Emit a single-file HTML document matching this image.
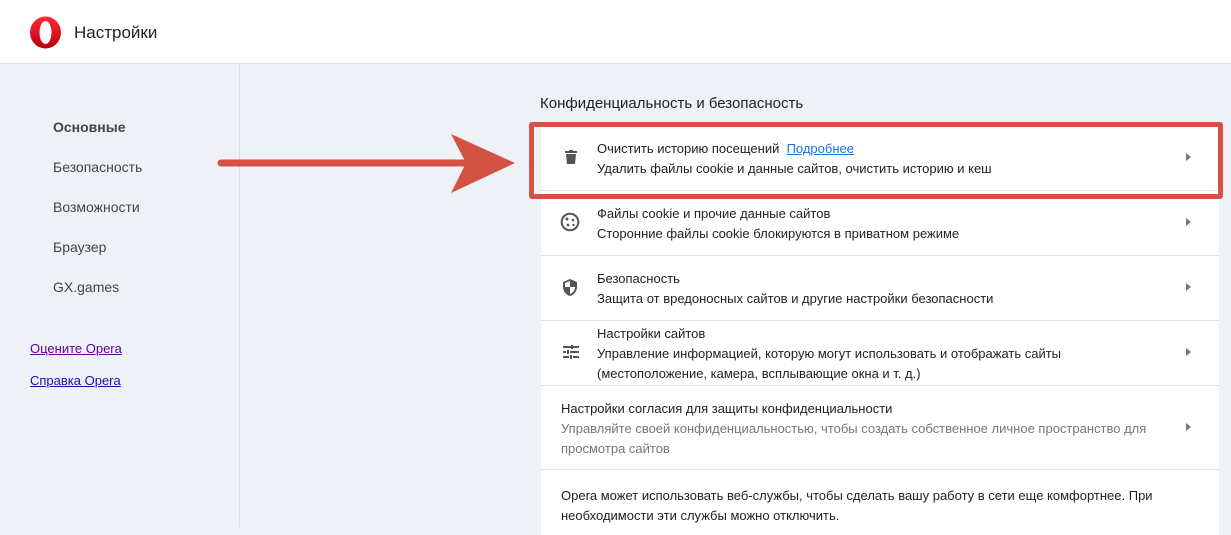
<!DOCTYPE html>
<html><head><meta charset="utf-8"><style>
body{margin:0;width:1231px;height:527px;overflow:hidden;background:#eef2f7;font-family:"Liberation Sans","DejaVu Sans",sans-serif;position:relative;color:#222}
.a{position:absolute;white-space:nowrap}
.hdr{position:absolute;left:0;top:0;width:1231px;height:63px;background:#fff;border-bottom:1px solid #d8dee6}
.vl{position:absolute;left:239px;top:64px;width:1px;height:463px;background:#d6dde6}
.side{font-size:14px;color:#444;left:53px}
.card{position:absolute;left:541px;top:125px;width:678px;height:410px;background:#fff}
.sep{position:absolute;left:541px;width:678px;height:1px;background:#dde3ea}
.t{font-size:13px;color:#222}
.chev{position:absolute;left:1186px;width:0;height:0;border-top:4px solid transparent;border-bottom:4px solid transparent;border-left:5px solid #777}
</style></head><body>
<div class="hdr"></div>
<svg class="a" style="left:29px;top:16px" width="33" height="33" viewBox="0 0 33 33"><defs><linearGradient id="g" x1="0" y1="0" x2="0" y2="1"><stop offset="0" stop-color="#ff2a37"/><stop offset="1" stop-color="#b8000f"/></linearGradient></defs><ellipse cx="16.5" cy="16.5" rx="15.5" ry="16" fill="url(#g)"/><ellipse cx="16.5" cy="16.5" rx="6" ry="11.5" fill="#fff"/></svg>
<div class="a" style="left:74px;top:23px;font-size:17px;color:#222">Настройки</div>
<div class="vl"></div>
<div class="a side" style="top:119px;font-weight:bold">Основные</div>
<div class="a side" style="top:159px">Безопасность</div>
<div class="a side" style="top:199px">Возможности</div>
<div class="a side" style="top:239px">Браузер</div>
<div class="a side" style="top:279px">GX.games</div>
<div class="a" style="left:30px;top:341px;font-size:13px;color:#660099;text-decoration:underline">Оцените Opera</div>
<div class="a" style="left:30px;top:373px;font-size:13px;color:#1a0dab;text-decoration:underline">Справка Opera</div>
<div class="a" style="left:540px;top:95px;font-size:15px;color:#222">Конфиденциальность и безопасность</div>
<div class="card"></div>
<div class="sep" style="top:190px"></div>
<div class="sep" style="top:255px"></div>
<div class="sep" style="top:320px"></div>
<div class="sep" style="top:385px"></div>
<div class="sep" style="top:469px"></div>
<!-- row1 -->
<svg class="a" style="left:565px;top:150px" width="12" height="14" viewBox="0 0 12 14"><rect x="0" y="1" width="12" height="2" fill="#555"/><rect x="4" y="0" width="4" height="2" fill="#555"/><path d="M1 4h10l-1 10H2z" fill="#555"/></svg>
<div class="a t" style="left:597px;top:141px">Очистить историю посещений&nbsp;&nbsp;<span style="color:#1a73e8;text-decoration:underline">Подробнее</span></div>
<div class="a t" style="left:597px;top:161px">Удалить файлы cookie и данные сайтов, очистить историю и кеш</div>
<div class="chev" style="top:153px"></div>
<!-- row2 -->
<svg class="a" style="left:560px;top:212px" width="20" height="20" viewBox="0 0 20 20"><circle cx="10" cy="10" r="8.3" fill="none" stroke="#555" stroke-width="2"/><circle cx="7" cy="7" r="1.5" fill="#555"/><circle cx="13" cy="8" r="1.3" fill="#555"/><circle cx="8" cy="13" r="1.4" fill="#555"/><circle cx="13.5" cy="13" r="1.2" fill="#555"/></svg>
<div class="a t" style="left:597px;top:206px">Файлы cookie и прочие данные сайтов</div>
<div class="a t" style="left:597px;top:226px">Сторонние файлы cookie блокируются в приватном режиме</div>
<div class="chev" style="top:218px"></div>
<!-- row3 -->
<svg class="a" style="left:563px;top:279px" width="14" height="17" viewBox="0 0 14 17"><path d="M7 0L0 3v5c0 4 3 8 7 9 4-1 7-5 7-9V3z" fill="#555"/><path d="M7 2v6H2V4zM7 8h5c0 3-2 6-5 7z" fill="#fff"/></svg>
<div class="a t" style="left:597px;top:271px">Безопасность</div>
<div class="a t" style="left:597px;top:291px">Защита от вредоносных сайтов и другие настройки безопасности</div>
<div class="chev" style="top:283px"></div>
<!-- row4 -->
<svg class="a" style="left:563px;top:345px" width="16" height="14" viewBox="0 0 16 14"><g fill="#555"><rect x="0" y="1" width="8" height="2"/><rect x="10" y="1" width="6" height="2"/><rect x="8" y="0" width="2" height="4"/><rect x="0" y="6" width="3" height="2"/><rect x="7" y="6" width="9" height="2"/><rect x="4" y="5" width="2" height="4"/><rect x="0" y="11" width="6" height="2"/><rect x="10" y="11" width="6" height="2"/><rect x="7" y="10" width="2" height="4"/></g></svg>
<div class="a t" style="left:597px;top:326px">Настройки сайтов</div>
<div class="a t" style="left:597px;top:346px">Управление информацией, которую могут использовать и отображать сайты</div>
<div class="a t" style="left:597px;top:366px">(местоположение, камера, всплывающие окна и т. д.)</div>
<div class="chev" style="top:348px"></div>
<!-- row5 -->
<div class="a t" style="left:561px;top:401px">Настройки согласия для защиты конфиденциальности</div>
<div class="a t" style="left:561px;top:421px;color:#777">Управляйте своей конфиденциальностью, чтобы создать собственное личное пространство для</div>
<div class="a t" style="left:561px;top:441px;color:#777">просмотра сайтов</div>
<div class="chev" style="top:423px"></div>
<div class="a t" style="left:561px;top:488px">Opera может использовать веб-службы, чтобы сделать вашу работу в сети еще комфортнее. При</div>
<div class="a t" style="left:561px;top:508px">необходимости эти службы можно отключить.</div>
<!-- highlight -->
<div class="a" style="left:529px;top:122px;width:684px;height:67px;border:5px solid #d35244;border-radius:3px"></div>
<svg class="a" style="left:210px;top:130px" width="310" height="68"><line x1="11" y1="33" x2="265" y2="33" stroke="#d35244" stroke-width="7" stroke-linecap="round"/><path d="M241 4L305 33L241 63L256 33z" fill="#d35244"/></svg>
</body></html>
